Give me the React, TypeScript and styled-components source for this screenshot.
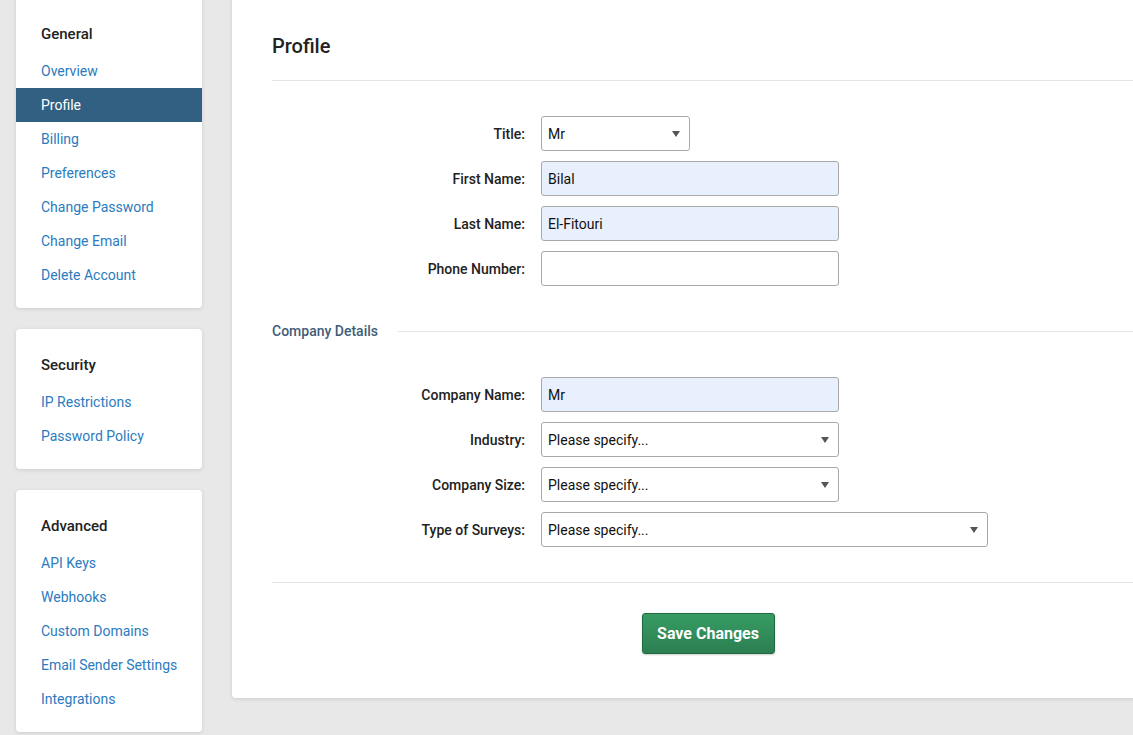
import React from "react";
import styled, { createGlobalStyle } from "styled-components";

const Global = createGlobalStyle`
  html, body { margin: 0; padding: 0; }
  body {
    background: #e8e8e8;
    font-family: Roboto, "Liberation Sans", Arial, sans-serif;
    overflow: hidden;
    width: 1133px;
    height: 735px;
  }
  * { box-sizing: border-box; }
`;

const Viewport = styled.div`
  width: 1133px;
  height: 735px;
  overflow: hidden;
`;

const Page = styled.div`
  display: flex;
  align-items: flex-start;
  gap: 30px;
  padding-left: 16px;
  margin-top: -20px;
  width: 1200px;
`;

const Sidebar = styled.div`
  width: 186px;
  flex: 0 0 186px;
  display: flex;
  flex-direction: column;
  gap: 21px;
  padding-top: 18px;
`;

const Card = styled.div`
  background: #fff;
  border-radius: 4px;
  box-shadow: 0 1px 4px rgba(0, 0, 0, 0.12);
  padding: 20px 0 16px;
`;

const CardTitle = styled.div`
  height: 32px;
  line-height: 32px;
  margin-bottom: 4px;
  padding-left: 25px;
  font-size: 15px;
  font-weight: 500;
  color: #222;
`;

const NavItem = styled.a<{ $active?: boolean }>`
  display: block;
  height: 34px;
  line-height: 34px;
  padding-left: 25px;
  font-size: 14px;
  text-decoration: none;
  color: ${(p) => (p.$active ? "#fff" : "#2b7bc0")};
  background: ${(p) => (p.$active ? "#316083" : "transparent")};
  cursor: pointer;
`;

const Panel = styled.div`
  flex: 0 0 952px;
  width: 952px;
  background: #fff;
  border-radius: 4px;
  box-shadow: 0 1px 4px rgba(0, 0, 0, 0.12);
  padding: 52px 40px 44px;
`;

const PanelTitle = styled.h1`
  margin: 0;
  font-size: 20px;
  line-height: 28px;
  font-weight: 500;
  color: #222;
  padding-bottom: 20px;
  border-bottom: 1px solid #e6e6e6;
`;

const Form = styled.div<{ $top?: number }>`
  display: flex;
  flex-direction: column;
  gap: 10px;
  padding-top: ${(p) => p.$top ?? 0}px;
`;

const Row = styled.div`
  display: flex;
  align-items: center;
  height: 35px;
`;

const Label = styled.label`
  width: 269px;
  flex: 0 0 269px;
  padding-right: 16px;
  text-align: right;
  font-size: 14px;
  font-weight: 500;
  color: #222;
`;

const Input = styled.div<{ $w: number; $filled?: boolean }>`
  width: ${(p) => p.$w}px;
  height: 35px;
  border: 1px solid #a9a9a9;
  border-radius: 3px;
  background: ${(p) => (p.$filled ? "#e8f0fe" : "#fff")};
  padding: 0 7px 0 6px;
  display: flex;
  align-items: center;
  justify-content: space-between;
  font-size: 14px;
  color: #111;
`;

const Arrow = styled.span`
  width: 0;
  height: 0;
  border-left: 4px solid transparent;
  border-right: 4px solid transparent;
  border-top: 6px solid #555;
  margin-right: 2px;
`;

const Section = styled.div`
  display: flex;
  align-items: center;
  gap: 20px;
  margin: 35px 0 36px;
  height: 20px;
`;

const SectionTitle = styled.div`
  font-size: 14px;
  font-weight: 500;
  color: #3f5d78;
  white-space: nowrap;
`;

const SectionLine = styled.div`
  flex: 1;
  height: 1px;
  background: #e6e6e6;
`;

const Footer = styled.div`
  margin-top: 35px;
  border-top: 1px solid #e6e6e6;
  padding-top: 30px;
  display: flex;
  justify-content: center;
`;

const SaveButton = styled.button`
  width: 133px;
  height: 41px;
  border: 1px solid #1f6a40;
  border-radius: 3px;
  background: linear-gradient(#379c63, #2b7f51);
  color: #fff;
  font-family: Roboto, "Liberation Sans", Arial, sans-serif;
  font-size: 16px;
  font-weight: 700;
  box-shadow: 0 1px 2px rgba(0, 0, 0, 0.2);
  cursor: pointer;
`;

const Field = ({
  label,
  w,
  value,
  filled,
  select,
}: {
  label: string;
  w: number;
  value?: string;
  filled?: boolean;
  select?: boolean;
}) => (
  <Row>
    <Label>{label}</Label>
    <Input $w={w} $filled={filled}>
      <span>{value}</span>
      {select && <Arrow />}
    </Input>
  </Row>
);

export default function App() {
  return (
    <Viewport>
      <Global />
      <Page>
        <Sidebar>
          <Card>
            <CardTitle>General</CardTitle>
            <NavItem>Overview</NavItem>
            <NavItem $active>Profile</NavItem>
            <NavItem>Billing</NavItem>
            <NavItem>Preferences</NavItem>
            <NavItem>Change Password</NavItem>
            <NavItem>Change Email</NavItem>
            <NavItem>Delete Account</NavItem>
          </Card>
          <Card>
            <CardTitle>Security</CardTitle>
            <NavItem>IP Restrictions</NavItem>
            <NavItem>Password Policy</NavItem>
          </Card>
          <Card>
            <CardTitle>Advanced</CardTitle>
            <NavItem>API Keys</NavItem>
            <NavItem>Webhooks</NavItem>
            <NavItem>Custom Domains</NavItem>
            <NavItem>Email Sender Settings</NavItem>
            <NavItem>Integrations</NavItem>
          </Card>
        </Sidebar>
        <Panel>
          <PanelTitle>Profile</PanelTitle>
          <Form $top={35}>
            <Field label="Title:" w={149} value="Mr" select />
            <Field label="First Name:" w={298} value="Bilal" filled />
            <Field label="Last Name:" w={298} value="El-Fitouri" filled />
            <Field label="Phone Number:" w={298} />
          </Form>
          <Section>
            <SectionTitle>Company Details</SectionTitle>
            <SectionLine />
          </Section>
          <Form>
            <Field label="Company Name:" w={298} value="Mr" filled />
            <Field label="Industry:" w={298} value="Please specify..." select />
            <Field label="Company Size:" w={298} value="Please specify..." select />
            <Field label="Type of Surveys:" w={447} value="Please specify..." select />
          </Form>
          <Footer>
            <SaveButton>Save Changes</SaveButton>
          </Footer>
        </Panel>
      </Page>
    </Viewport>
  );
}
